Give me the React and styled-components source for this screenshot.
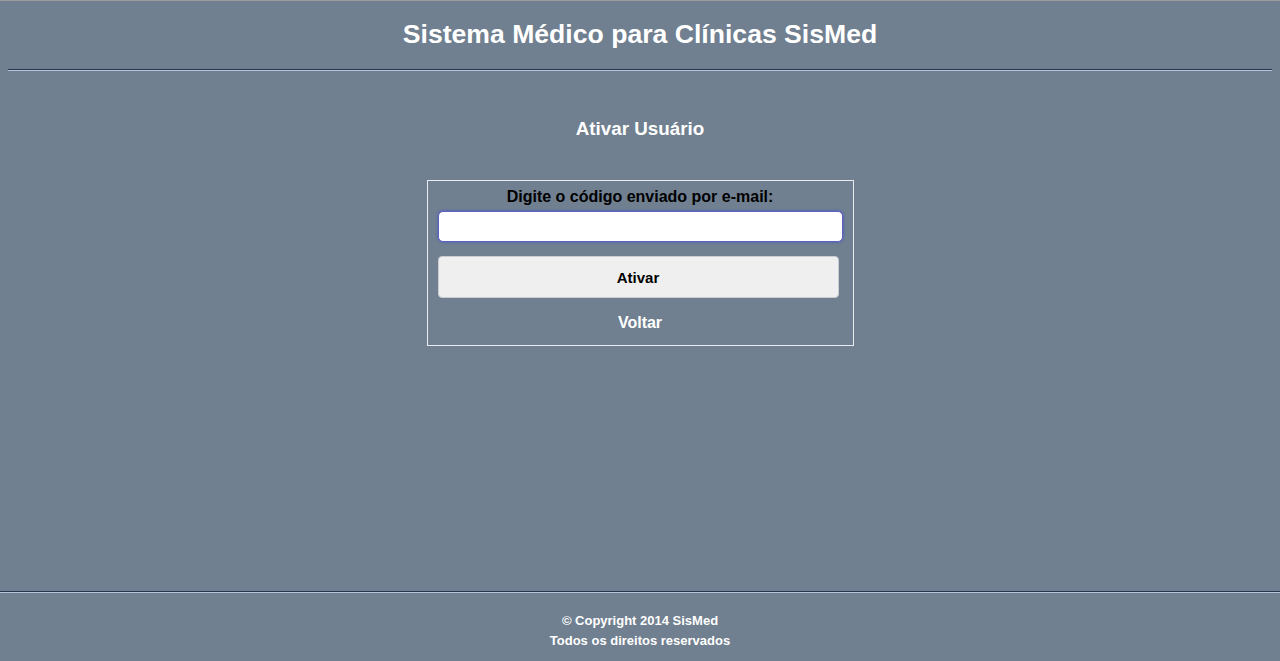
import React from 'react';
import styled, { createGlobalStyle } from 'styled-components';

const GlobalStyle = createGlobalStyle`
    html, body {
        margin:0;
        padding:0;
        background:#708090;
        font-family:"Liberation Sans", Arial, sans-serif;
    }
`

const Page = styled.div`
    display:flex;
    flex-direction:column;
    min-height:100vh;
    box-sizing:border-box;
    border-top:1px solid #9b9b9b;
`
const Header = styled.header`
    padding:0 8px;
    h1 {
        margin:18px 0 20px;
        font-size:26.6px;
        line-height:30px;
        text-align:center;
        color:white;
    }
`
const Rule = styled.div`
    height:1px;
    background:#2b3550;
    border-bottom:1px solid #b8c4dc;
`
const Main = styled.main`
    flex:1;
    display:flex;
    flex-direction:column;
    align-items:center;
    h3 {
        margin:47px 0 40px;
        font-size:18.8px;
        line-height:22px;
        color:white;
    }
`
const ActivateForm = styled.form`
    display:flex;
    flex-direction:column;
    align-items:flex-start;
    width:427px;
    box-sizing:border-box;
    padding:7px 10px 13px;
    border:1px solid #e8ecf0;
    label {
        align-self:stretch;
        text-align:center;
        font-size:16px;
        line-height:18px;
        font-weight:bold;
        color:black;
    }
`
const CodeInput = styled.input`
    width:405px;
    height:31px;
    margin-top:5px;
    box-sizing:border-box;
    border:1px solid #5b62c0;
    border-radius:5px;
    box-shadow:0 0 3px #4a50c8;
    background:white;
    outline:none;
`
const SubmitButton = styled.button`
    width:401px;
    height:42px;
    margin-top:14px;
    border:1px solid #c9ccd0;
    border-radius:4px;
    background:#efefef;
    font-family:"Liberation Sans", Arial, sans-serif;
    font-size:15px;
    font-weight:bold;
    color:black;
`
const BackLink = styled.a`
    align-self:stretch;
    margin-top:16px;
    text-align:center;
    font-size:16px;
    line-height:18px;
    font-weight:bold;
    color:white;
    text-decoration:none;
`
const Footer = styled.footer`
    padding-bottom:10px;
    p {
        margin:0;
        text-align:center;
        font-size:13px;
        line-height:20px;
        font-weight:bold;
        color:white;
    }
    p:first-of-type {
        margin-top:18px;
    }
`

const App = () => {
    return(
        <Page>
            <GlobalStyle/>
            <Header>
                <h1>Sistema Médico para Clínicas SisMed</h1>
                <Rule/>
            </Header>
            <Main>
                <h3>Ativar Usuário</h3>
                <ActivateForm onSubmit={(e)=>e.preventDefault()}>
                    <label htmlFor='codigo'>Digite o código enviado por e-mail:</label>
                    <CodeInput id='codigo' type='text'/>
                    <SubmitButton type='submit'>Ativar</SubmitButton>
                    <BackLink href='#'>Voltar</BackLink>
                </ActivateForm>
            </Main>
            <Footer>
                <Rule/>
                <p>© Copyright 2014 SisMed</p>
                <p>Todos os direitos reservados</p>
            </Footer>
        </Page>
    )
}

export default App;
